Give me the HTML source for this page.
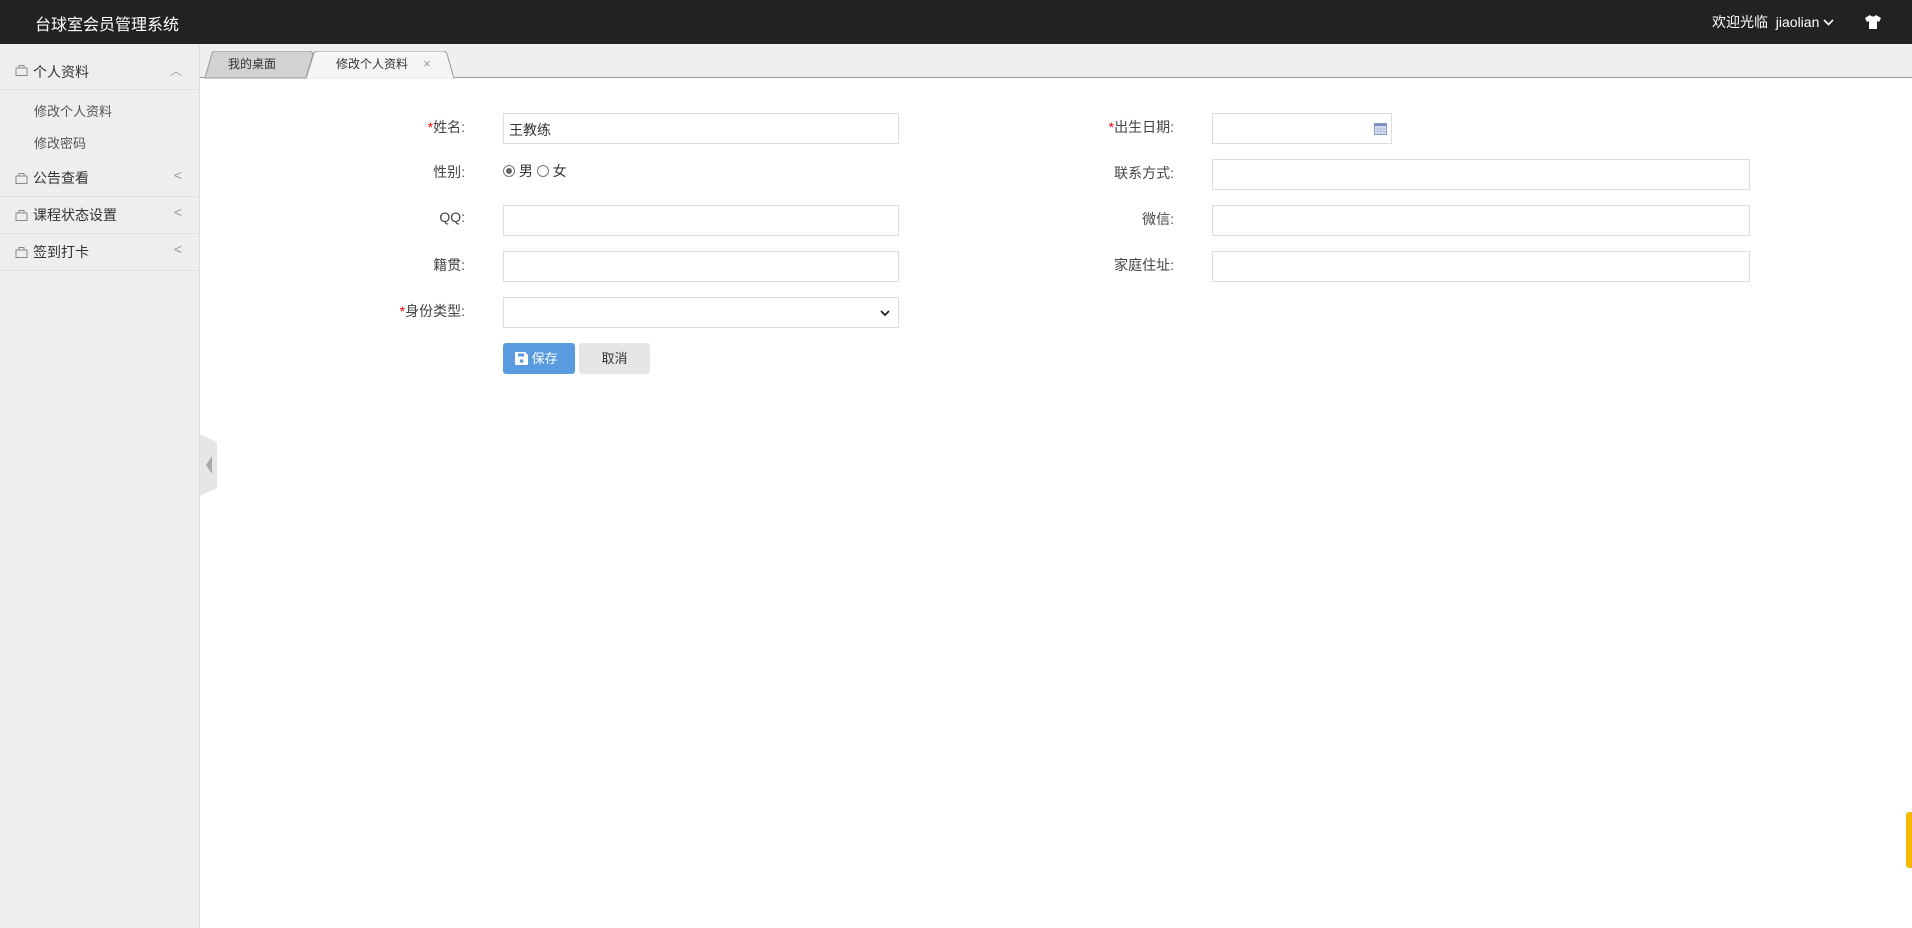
<!DOCTYPE html>
<html><head><meta charset="utf-8"><style>
*{margin:0;padding:0;box-sizing:border-box}
body{width:1912px;height:928px;overflow:hidden;background:#fff;font-family:"Liberation Sans","Noto Sans CJK SC",sans-serif;font-size:13px;color:#333;position:relative}
.hd{position:absolute;left:0;top:0;width:1912px;height:44px;background:#222;color:#fff}
.hd .t{position:absolute;left:35px;top:11px;font-size:16px}
.hd .r{position:absolute;left:1712px;top:12px;font-size:14px}
.sb{position:absolute;left:0;top:44px;width:200px;height:884px;background:#eee;border-right:1px solid #ddd}
.it{position:absolute;left:0;width:200px;height:37px;border-bottom:1px solid #e0e0e0;font-size:14px;color:#333}
.it span.l{position:absolute;left:33px;top:8px}
.it svg{position:absolute;left:15px;top:12px}
.it .a{position:absolute;right:18px;top:7px;color:#999;font-size:14px}
.sub{position:absolute;left:34px;font-size:13px;color:#555}
.tb{position:absolute;left:200px;top:44px;width:1712px;height:34px;background:#efeff1;border-bottom:1px solid #999}
.tab{position:absolute;top:8px;height:26px;font-size:12px;text-align:center;line-height:26px}
.lb{position:absolute;text-align:right;font-size:14px;color:#444}
.lb i{color:#e00;font-style:normal}
.in{position:absolute;height:31px;border:1px solid #ddd;background:#fff}
</style></head><body>
<div class="hd"><div class="t">台球室会员管理系统</div>
<div class="r">欢迎光临 &nbsp;jiaolian <svg width="11" height="8" viewBox="0 0 11 8"><path d="M1 1l4.5 4.5L10 1" stroke="#fff" stroke-width="1.6" fill="none"/></svg></div>
<svg style="position:absolute;left:1865px;top:15px" width="16" height="14" viewBox="0 0 16 14"><path d="M5 0L0 3l2 4 2-1v8h8V6l2 1 2-4-5-3c-1 2-5 2-6 0z" fill="#fff"/></svg>
</div>
<div class="sb">
<div class="it" style="top:8px;height:38px"><svg width="13" height="12" viewBox="0 0 13 12"><path d="M1 4h11v7.5H1zM4 4V1.5h5V4" stroke="#888" fill="none"/></svg><span class="l" style="top:10px">个人资料</span><span class="a" style="font-size:12px;top:10px">︿</span></div>
<div class="sub" style="top:57px">修改个人资料</div>
<div class="sub" style="top:89px">修改密码</div>
<div class="it" style="top:116px"><svg width="13" height="12" viewBox="0 0 13 12"><path d="M1 4h11v7.5H1zM4 4V1.5h5V4" stroke="#888" fill="none"/></svg><span class="l">公告查看</span><span class="a">&lt;</span></div>
<div class="it" style="top:153px"><svg width="13" height="12" viewBox="0 0 13 12"><path d="M1 4h11v7.5H1zM4 4V1.5h5V4" stroke="#888" fill="none"/></svg><span class="l">课程状态设置</span><span class="a">&lt;</span></div>
<div class="it" style="top:190px"><svg width="13" height="12" viewBox="0 0 13 12"><path d="M1 4h11v7.5H1zM4 4V1.5h5V4" stroke="#888" fill="none"/></svg><span class="l">签到打卡</span><span class="a">&lt;</span></div>
</div>
<svg style="position:absolute;left:200px;top:434px" width="18" height="62" viewBox="0 0 18 62"><path d="M0 0L17 8V54L0 62z" fill="#e6e6e6"/><path d="M12 22L6 31l6 9z" fill="#aaa"/></svg>
<div class="tb">
<svg style="position:absolute;left:0;top:7px" width="260" height="28" viewBox="0 0 260 28">
<path d="M5 27L12 2Q13 0 16 0H108Q112 0 113 3L106 27z" fill="#d2d2d2" stroke="#999"/>
<path d="M106 27.5L114 2Q115 0 118 0H242Q246 0 247 3L254 27.5" fill="#f5f5f5" stroke="#999"/>
<path d="M107 27.5H253" stroke="#efeff1" stroke-width="1.5"/>
</svg>
<div class="tab" style="left:22px;width:60px;top:7px">我的桌面</div>
<div class="tab" style="left:132px;width:80px;top:7px">修改个人资料</div>
<div class="tab" style="left:220px;width:14px;top:7px;color:#999;font-size:13px">×</div>
</div>
<div class="lb" style="left:340px;width:125px;top:117px"><i>*</i>姓名:</div>
<div class="in" style="left:503px;top:113px;width:396px;padding:6px 5px;font-size:14px">王教练</div>
<div class="lb" style="left:340px;width:125px;top:162px">性别:</div>
<div style="position:absolute;left:503px;top:161px;font-size:14px">
<svg width="12" height="12" style="vertical-align:-1px"><circle cx="6" cy="6" r="5.5" fill="#fff" stroke="#777"/><circle cx="6" cy="6" r="3" fill="#666"/></svg> 男 <svg width="12" height="12" style="vertical-align:-1px"><circle cx="6" cy="6" r="5.5" fill="#fff" stroke="#777"/></svg> 女</div>
<div class="lb" style="left:340px;width:125px;top:209px">QQ:</div>
<div class="in" style="left:503px;top:205px;width:396px"></div>
<div class="lb" style="left:340px;width:125px;top:255px">籍贯:</div>
<div class="in" style="left:503px;top:251px;width:396px"></div>
<div class="lb" style="left:340px;width:125px;top:301px"><i>*</i>身份类型:</div>
<div class="in" style="left:503px;top:297px;width:396px"><svg style="position:absolute;right:8px;top:12px" width="10" height="7" viewBox="0 0 10 7"><path d="M1 1l4 4 4-4" stroke="#222" stroke-width="1.8" fill="none"/></svg></div>
<div style="position:absolute;left:503px;top:343px;width:72px;height:31px;background:#5a9be0;border-radius:3px;color:#fff;font-size:13px;line-height:31px;padding-left:12px"><svg width="13" height="13" viewBox="0 0 13 13" style="vertical-align:-2px"><path d="M0 1Q0 0 1 0H10L13 3V12Q13 13 12 13H1Q0 13 0 12z" fill="#fff"/><rect x="3" y="1.5" width="6" height="3" fill="#5a9be0"/><circle cx="6.5" cy="9" r="1.8" fill="#5a9be0"/></svg> 保存</div>
<div style="position:absolute;left:579px;top:343px;width:71px;height:31px;background:#e6e6e6;border-radius:3px;color:#333;font-size:13px;line-height:31px;text-align:center">取消</div>
<div class="lb" style="left:1030px;width:144px;top:117px"><i>*</i>出生日期:</div>
<div class="in" style="left:1212px;top:113px;width:180px"><svg style="position:absolute;right:4px;top:9px" width="13" height="12" viewBox="0 0 13 12"><rect x=".5" y=".5" width="12" height="11" fill="#dde4f0" stroke="#8a9bbf"/><rect x="1" y="1" width="11" height="2" fill="#7a8fc0"/><path d="M1 6h11M1 8.5h11M4 3v8.5M7 3v8.5M10 3v8.5" stroke="#9aabd0" stroke-width=".6"/></svg></div>
<div class="lb" style="left:1030px;width:144px;top:163px">联系方式:</div>
<div class="in" style="left:1212px;top:159px;width:538px"></div>
<div class="lb" style="left:1030px;width:144px;top:209px">微信:</div>
<div class="in" style="left:1212px;top:205px;width:538px"></div>
<div class="lb" style="left:1030px;width:144px;top:255px">家庭住址:</div>
<div class="in" style="left:1212px;top:251px;width:538px"></div>
<div style="position:absolute;left:1906px;top:812px;width:6px;height:56px;background:#f5b800;border-radius:3px 0 0 3px"></div>
</body></html>
